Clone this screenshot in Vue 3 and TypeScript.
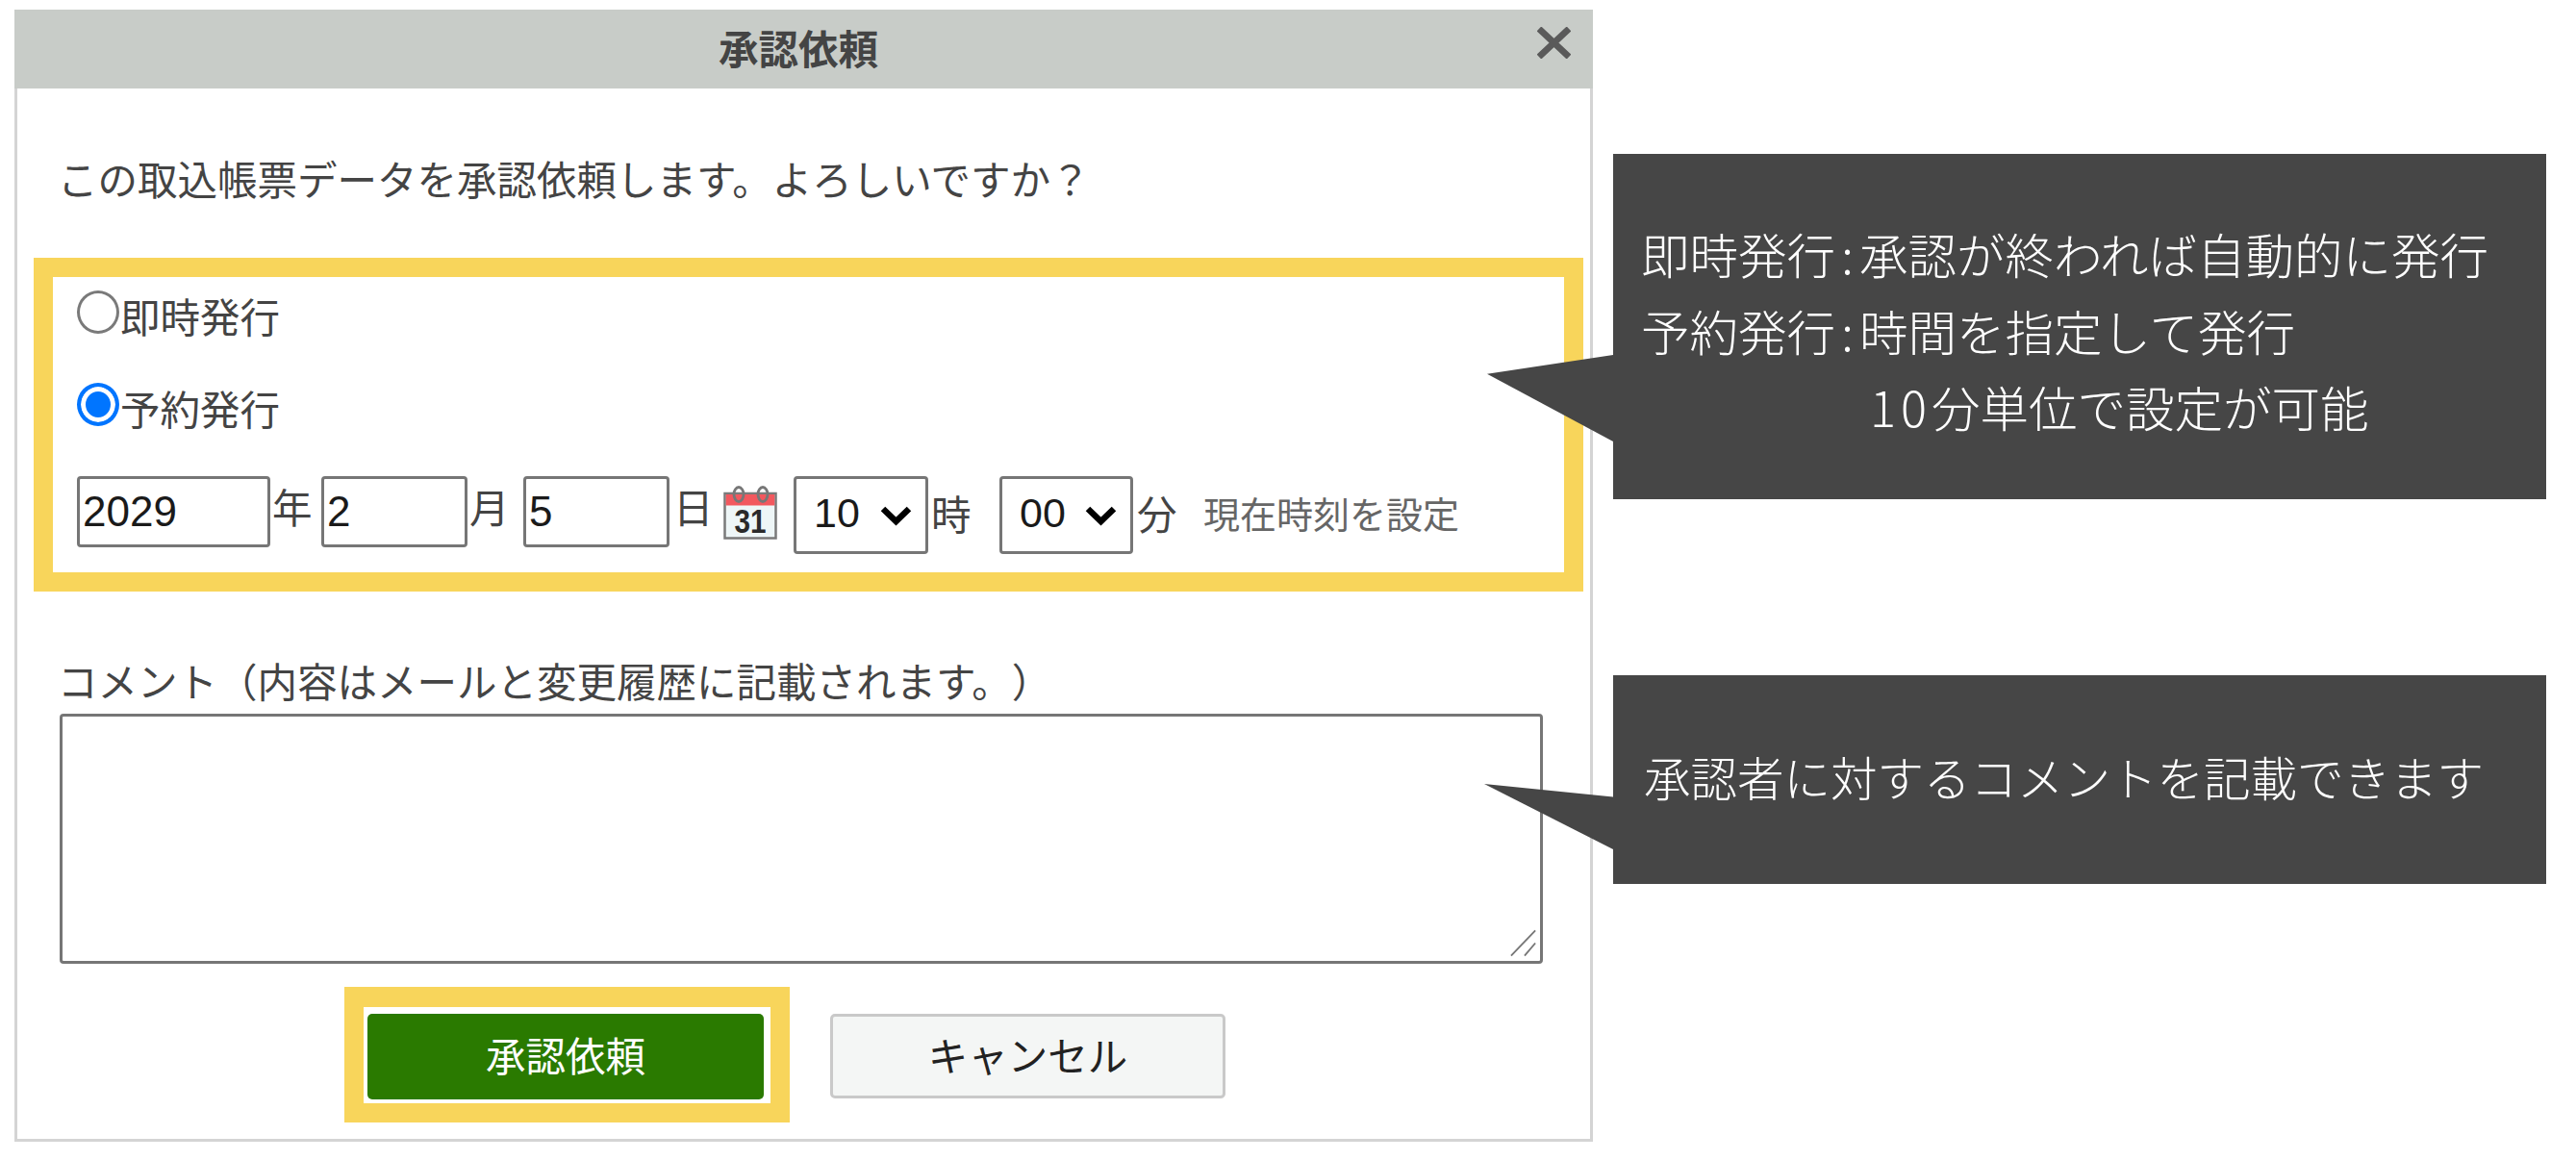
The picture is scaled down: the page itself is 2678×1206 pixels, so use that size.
<script setup lang="ts">
const year: string = '2029'
const month: string = '2'
const day: string = '5'
</script>

<template>
  <div class="page">
    <section class="dialog">
      <header class="head">
        <span class="title">承認依頼</span>
        <svg class="close" viewBox="0 0 36 34" aria-label="閉じる">
          <path d="M2 2 L34 32 M34 2 L2 32" stroke="#5a5a5a" stroke-width="7" fill="none" />
        </svg>
      </header>

      <p class="intro">この取込帳票データを承認依頼します。よろしいですか？</p>

      <div class="panel">
        <label class="radio-row">
          <input class="radio" type="radio" name="mode" />
          <span>即時発行</span>
        </label>
        <label class="radio-row second">
          <input class="radio" type="radio" name="mode" checked />
          <span>予約発行</span>
        </label>
        <div class="date-row">
          <input class="field year" type="text" :value="year" />
          <span class="unit u-year">年</span>
          <input class="field short" type="text" :value="month" />
          <span class="unit u-month">月</span>
          <input class="field short" type="text" :value="day" />
          <span class="unit u-day">日</span>
          <svg class="cal" viewBox="0 0 56 56">
            <rect x="1.5" y="8" width="53" height="46.5" fill="#eef6f7" stroke="#7a7a7a" stroke-width="2.5" />
            <rect x="2.7" y="9" width="50.6" height="11.5" fill="#f2585e" />
            <ellipse cx="16" cy="9" rx="5" ry="7.5" fill="none" stroke="#777" stroke-width="2.8" />
            <ellipse cx="41" cy="9" rx="5" ry="7.5" fill="none" stroke="#777" stroke-width="2.8" />
            <text x="28" y="49" text-anchor="middle" textLength="33" lengthAdjust="spacingAndGlyphs" class="cal-num">31</text>
          </svg>
          <select class="pick hour">
            <option>10</option>
          </select>
          <span class="unit u-hour">時</span>
          <select class="pick min">
            <option>00</option>
          </select>
          <span class="unit u-min">分</span>
          <span class="now">現在時刻を設定</span>
        </div>
      </div>

      <p class="comment-label">コメント（内容はメールと変更履歴に記載されます。）</p>
      <div class="area-wrap">
        <textarea class="area"></textarea>
        <svg class="grip" viewBox="0 0 30 30">
          <path d="M1 29 L28 1 M16 29 L28 15" stroke="#777" stroke-width="2" fill="none" />
        </svg>
      </div>

      <div class="actions">
        <div class="mark">
          <button class="btn primary" type="button">承認依頼</button>
        </div>
        <button class="btn cancel" type="button">キャンセル</button>
      </div>
    </section>

    <aside class="notes">
      <div class="note note-a">
        <p>即時発行<span class="colon">:</span>承認が終われば自動的に発行</p>
        <p>予約発行<span class="colon">:</span>時間を指定して発行</p>
        <p class="indent"><span class="digits">10</span>分単位で設定が可能</p>
      </div>
      <div class="note note-b">
        <p>承認者に対するコメントを記載できます</p>
      </div>
    </aside>
  </div>
</template>

<style scoped>
.page {
  display: flex;
  align-items: flex-start;
  gap: 21px;
  width: 2678px;
  height: 1206px;
  box-sizing: border-box;
  padding: 10px 0 0 15px;
  background: #fff;
  font-family: "Noto Sans CJK JP", "Noto Sans", sans-serif;
  color: #3f3f3f;
  font-size: 41.5px;
  text-spacing-trim: space-all;
  overflow: hidden;
}

.dialog {
  flex: none;
  width: 1641px;
  height: 1177px;
  box-sizing: border-box;
  border: 3px solid #d4d4d4;
  border-top: 0;
  display: flex;
  flex-direction: column;
}

.head {
  position: relative;
  margin: 0 -3px;
  height: 82px;
  padding-right: 11px;
  background: #c8ccc8;
  display: flex;
  align-items: center;
  justify-content: center;
}

.title {
  font-weight: 700;
  color: #444;
  font-size: 41.5px;
  line-height: 74px;
  height: 78px;
}

.close {
  position: absolute;
  right: 23px;
  top: 18px;
  width: 35px;
  height: 33px;
}

.intro {
  margin: 68px 0 0 42px;
  line-height: 50px;
  color: #444;
}

.panel {
  margin: 58px 7px 0 17px;
  height: 347px;
  box-sizing: border-box;
  border: 20px solid #f8d55b;
  padding: 14px 0 0 25px;
  display: flex;
  flex-direction: column;
}

.radio-row {
  display: flex;
  align-items: flex-start;
  line-height: 52px;
  height: 56px;
  color: #444;
}

.radio-row.second {
  margin-top: 40px;
}

.radio {
  appearance: none;
  flex: none;
  box-sizing: border-box;
  width: 44px;
  height: 45px;
  margin: 0 1px 0 0;
  border: 3px solid #7a7a7a;
  border-radius: 50%;
  background: #fff;
}

.radio:checked {
  border: 4px solid #0075ff;
  background: #0075ff;
  box-shadow: inset 0 0 0 5px #fff;
}

.date-row {
  margin-top: 41px;
  display: flex;
  align-items: flex-start;
}

.field {
  height: 74px;
  box-sizing: border-box;
  border: 3px solid #767676;
  border-radius: 4px;
  padding: 0 0 0 3px;
  font-family: "Liberation Sans", Arial, sans-serif;
  font-size: 44px;
  color: #1a1a1a;
  background: #fff;
  outline: none;
}

.year { width: 201px; }
.short { width: 152px; }

.unit {
  flex: none;
  width: 41px;
  line-height: 63px;
  color: #444;
}

.u-year { margin: 0 10px 0 2px; }
.u-month { margin: 0 15px 0 2px; }
.u-day { margin: 0 11px 0 4px; }
.u-hour { margin: 0 30px 0 3px; line-height: 77px; }
.u-min { margin: 0 28px 0 4px; line-height: 77px; }

.cal {
  flex: none;
  width: 56px;
  height: 56px;
  margin: 10px 17px 0 0;
}

.cal-num {
  font-family: "Liberation Sans", Arial, sans-serif;
  font-weight: 700;
  font-size: 35px;
  fill: #2a2a2a;
}

.pick {
  appearance: none;
  flex: none;
  height: 81px;
  box-sizing: border-box;
  border: 3px solid #767676;
  border-radius: 4px;
  background: #fff url("data:image/svg+xml,%3Csvg xmlns='http://www.w3.org/2000/svg' width='33' height='22' viewBox='0 0 33 22'%3E%3Cpath d='M3 4 L16.5 17 L30 4' fill='none' stroke='%23000' stroke-width='6.5'/%3E%3C/svg%3E") no-repeat right 14px center;
  color: #1a1a1a;
  font-family: "Liberation Sans", Arial, sans-serif;
  font-size: 43px;
  padding: 0 0 5px 18px;
  outline: none;
}

.hour { width: 140px; }
.min { width: 139px; }

.now {
  font-size: 38px;
  color: #666;
  line-height: 76px;
}

.comment-label {
  margin: 67px 0 0 42px;
  line-height: 50px;
  color: #444;
}

.area-wrap {
  position: relative;
  margin: 10px 0 0 44px;
  width: 1542px;
  height: 260px;
}

.area {
  display: block;
  width: 100%;
  height: 100%;
  box-sizing: border-box;
  border: 3px solid #767676;
  border-radius: 4px;
  background: #fff;
  resize: none;
  outline: none;
}

.grip {
  position: absolute;
  right: 6px;
  bottom: 7px;
  width: 28px;
  height: 29px;
}

.actions {
  margin: 24px 0 0 340px;
  display: flex;
  align-items: flex-start;
  gap: 42px;
}

.mark {
  flex: none;
  width: 463px;
  height: 141px;
  box-sizing: border-box;
  border: 20px solid #f8d55b;
  border-top-width: 21px;
  padding: 7px 7px 4px 4px;
  background: #fff;
}

.btn {
  font-family: "Noto Sans CJK JP", "Noto Sans", sans-serif;
  font-size: 41.5px;
  border-radius: 5px;
  cursor: pointer;
}

.primary {
  display: block;
  width: 100%;
  height: 100%;
  border: 0;
  padding: 0 0 5px;
  background: #2a7a00;
  color: #fff;
}

.cancel {
  flex: none;
  width: 411px;
  height: 88px;
  margin-top: 28px;
  padding: 0 0 5px;
  box-sizing: border-box;
  border: 3px solid #c9c9c9;
  background: #f4f6f5;
  color: #222;
}

.notes {
  flex: none;
  width: 970px;
  display: flex;
  flex-direction: column;
  color: #fff;
  font-size: 50.5px;
  font-weight: 300;
}

.note {
  position: relative;
  background: #464646;
  box-sizing: border-box;
}

.note p {
  margin: 0;
  line-height: 79.5px;
  white-space: nowrap;
}

.note::before {
  content: "";
  position: absolute;
  right: 100%;
  background: #464646;
}

.note-a {
  margin-top: 150px;
  height: 359px;
  padding: 64px 0 0 29px;
}

.note-a::before {
  top: 209px;
  width: 131px;
  height: 90px;
  clip-path: polygon(100% 0, 0 22%, 100% 100%);
}

.colon {
  display: inline-block;
  width: 25px;
  text-align: center;
}

.indent {
  padding-left: 238px;
}

.digits {
  letter-spacing: 5px;
}

.note-b {
  margin-top: 183px;
  height: 217px;
  padding: 0 0 6px 32px;
  display: flex;
  align-items: center;
  font-size: 48.5px;
}

.note-b::before {
  top: 113px;
  width: 134px;
  height: 68px;
  clip-path: polygon(100% 20%, 0 0, 100% 100%);
}
</style>

<style>
html, body {
  margin: 0;
  background: #fff;
}
</style>
